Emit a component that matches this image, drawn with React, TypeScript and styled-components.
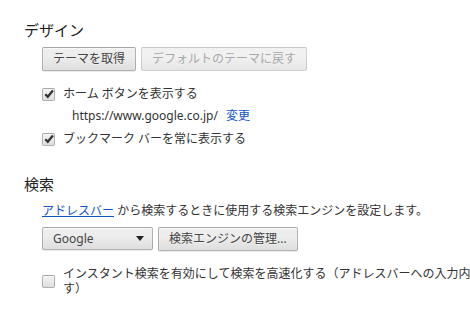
import React from 'react';
import styled, { createGlobalStyle } from 'styled-components';

const GlobalStyle = createGlobalStyle`
  html, body {
    margin: 0;
    padding: 0;
    background: #fff;
    overflow: hidden;
  }
  body {
    font-family: "Noto Sans", "Noto Sans CJK JP", sans-serif;
    font-size: 12px;
    color: #333;
  }
`;

const Page = styled.div`
  width: 470px;
  height: 316px;
  padding-left: 24px;
  box-sizing: border-box;
  overflow: hidden;
`;

const Section = styled.section<{ $top: number }>`
  margin-top: ${(p) => p.$top}px;
`;

const SectionTitle = styled.h3`
  margin: 0;
  font-size: 15px;
  font-weight: normal;
  line-height: 20px;
  color: #222;
`;

const SectionBody = styled.div`
  padding-left: 18px;
  display: flex;
  flex-direction: column;
`;

const ButtonRow = styled.div<{ $top: number }>`
  display: flex;
  gap: 5px;
  margin-top: ${(p) => p.$top}px;
`;

const Button = styled.button`
  height: 24px;
  padding: 0 10px;
  font-family: inherit;
  font-size: 12px;
  line-height: 22px;
  color: #444;
  border: 1px solid rgba(0, 0, 0, 0.25);
  border-radius: 2px;
  background: linear-gradient(#ededed, #ededed 38%, #dedede);
  box-shadow: 0 1px 0 rgba(0, 0, 0, 0.08), inset 0 1px 2px rgba(255, 255, 255, 0.75);
  text-shadow: 0 1px 0 #f0f0f0;
  white-space: nowrap;
  cursor: default;

  &:disabled {
    color: #a8a8a8;
    border-color: rgba(80, 80, 80, 0.2);
    background: linear-gradient(#f1f1f1, #f1f1f1 38%, #e6e6e6);
    box-shadow: none;
  }
`;

const SelectBox = styled.div`
  width: 111px;
  height: 23px;
  box-sizing: border-box;
  padding: 0 8px 0 10px;
  display: flex;
  align-items: center;
  justify-content: space-between;
  color: #444;
  border: 1px solid rgba(0, 0, 0, 0.25);
  border-radius: 2px;
  background: linear-gradient(#ededed, #ededed 38%, #dedede);
  box-shadow: 0 1px 0 rgba(0, 0, 0, 0.08), inset 0 1px 2px rgba(255, 255, 255, 0.75);
`;

const Arrow = styled.span`
  width: 0;
  height: 0;
  border-left: 4px solid transparent;
  border-right: 4px solid transparent;
  border-top: 5px solid #222;
`;

const CheckRow = styled.label<{ $top: number }>`
  display: flex;
  align-items: center;
  gap: 8px;
  margin-top: ${(p) => p.$top}px;
  line-height: 22px;
`;

const Box = styled.span`
  flex: none;
  width: 13px;
  height: 13px;
  box-sizing: border-box;
  border: 1px solid rgba(0, 0, 0, 0.25);
  border-radius: 2px;
  background: linear-gradient(#ededed, #ededed 38%, #dedede);
  box-shadow: inset 0 1px 2px rgba(255, 255, 255, 0.75);
  display: flex;
  align-items: center;
  justify-content: center;
`;

const LabelText = styled.span`
  line-height: 15px;
`;

const NoWrap = styled.span`
  white-space: nowrap;
`;

const UrlLine = styled.div`
  padding-left: 30px;
  line-height: 22px;
  display: flex;
  gap: 8px;
`;

const Link = styled.a<{ $underline?: boolean }>`
  color: #15c;
  text-decoration: ${(p) => (p.$underline ? 'underline' : 'none')};
  cursor: pointer;
`;

const Description = styled.div`
  margin-top: 7px;
  line-height: 20px;
`;

const Check = () => (
  <svg width="10" height="10" viewBox="0 0 10 10">
    <path d="M1.3 5.2 L3.8 7.8 L8.9 1.6" fill="none" stroke="#333" strokeWidth="2.3" />
  </svg>
);

const CheckItem = ({ checked, top, children }: { checked: boolean; top: number; children: React.ReactNode }) => (
  <CheckRow $top={top}>
    <Box>{checked && <Check />}</Box>
    {children}
  </CheckRow>
);

const App = () => {
  return (
    <Page>
      <GlobalStyle />
      <Section $top={20}>
        <SectionTitle>デザイン</SectionTitle>
        <SectionBody>
          <ButtonRow $top={7}>
            <Button>テーマを取得</Button>
            <Button disabled>デフォルトのテーマに戻す</Button>
          </ButtonRow>
          <CheckItem checked top={12}>
            <span>ホーム ボタンを表示する</span>
          </CheckItem>
          <UrlLine>
            <span>https://www.google.co.jp/</span>
            <Link>変更</Link>
          </UrlLine>
          <CheckItem checked top={1}>
            <span>ブックマーク バーを常に表示する</span>
          </CheckItem>
        </SectionBody>
      </Section>
      <Section $top={24}>
        <SectionTitle>検索</SectionTitle>
        <SectionBody>
          <Description>
            <Link $underline>アドレスバー</Link> から検索するときに使用する検索エンジンを設定します。
          </Description>
          <ButtonRow $top={6}>
            <SelectBox>
              <span>Google</span>
              <Arrow />
            </SelectBox>
            <Button>検索エンジンの管理...</Button>
          </ButtonRow>
          <CheckItem checked={false} top={15}>
            <LabelText>
              <NoWrap>インスタント検索を有効にして検索を高速化する（アドレスバーへの入力内容が記録される場合がありま</NoWrap>
              <br />
              す）
            </LabelText>
          </CheckItem>
        </SectionBody>
      </Section>
    </Page>
  );
};

export default App;
